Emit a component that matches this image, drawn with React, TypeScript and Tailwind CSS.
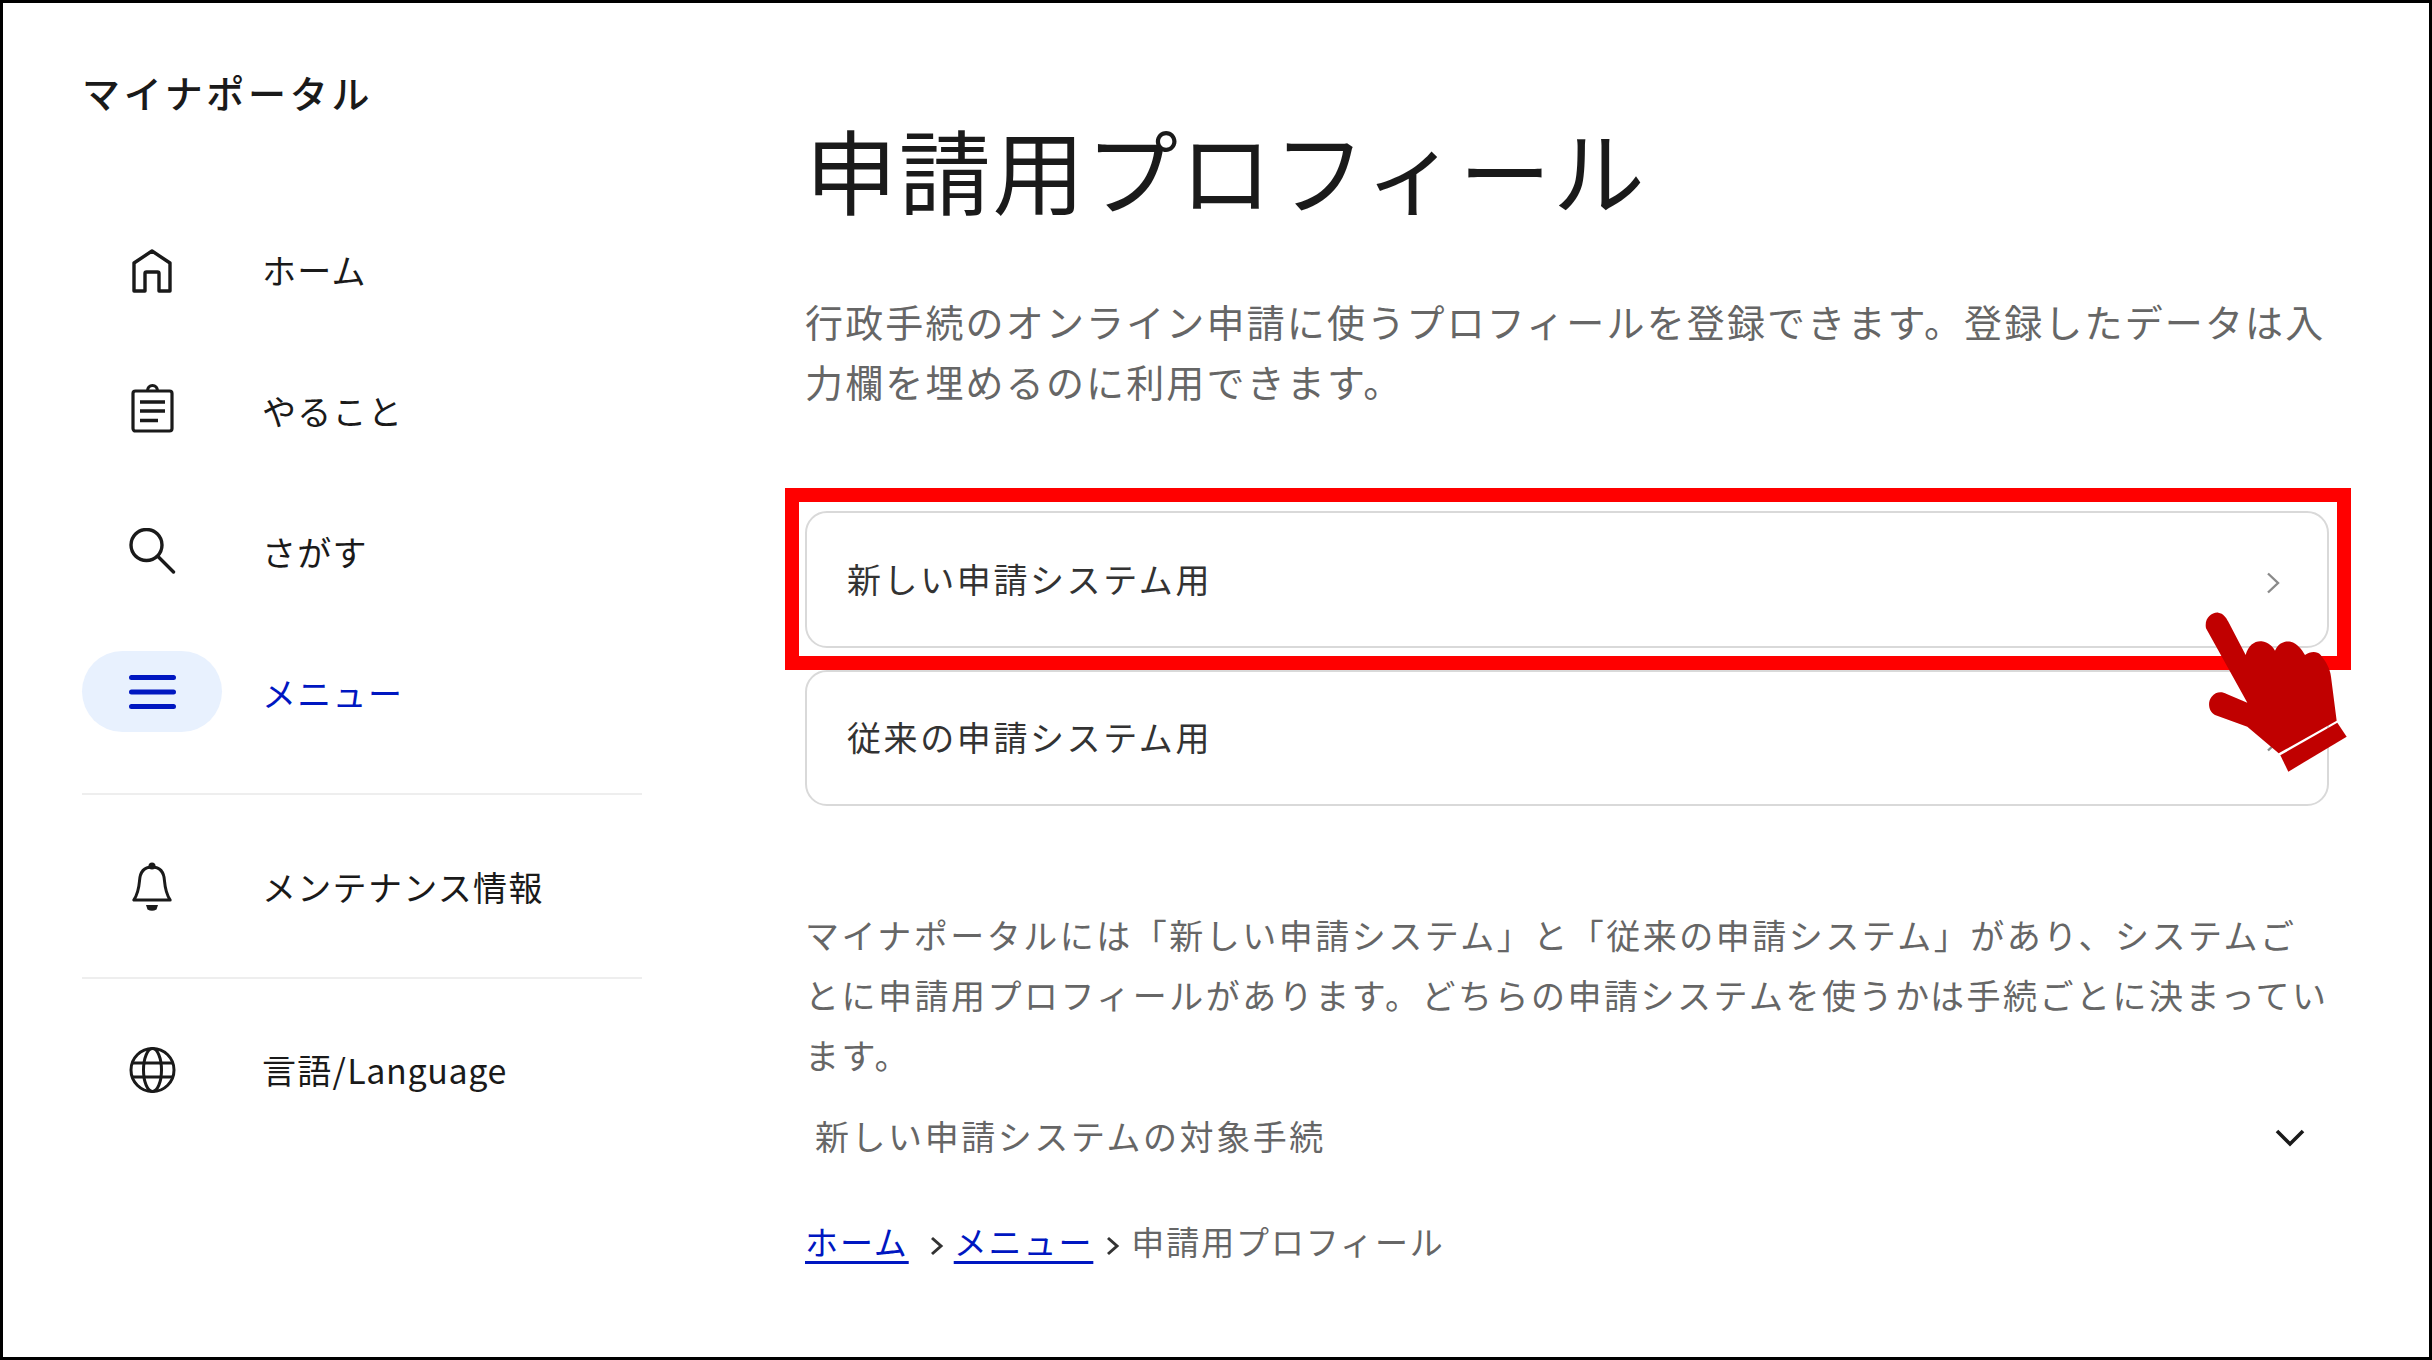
import React from "react";

const font = { fontFamily: '"Noto Sans CJK JP", "Noto Sans", sans-serif' };

function IconBox({ children, active }: { children: React.ReactNode; active?: boolean }) {
  return (
    <div className={`flex h-[81px] w-[140px] shrink-0 items-center justify-center rounded-full ${active ? "bg-[#e8f1fe]" : ""}`}>
      {children}
    </div>
  );
}

const Home = () => (
  <svg className="mt-[4px]" width="40" height="44" viewBox="0 0 40 44" fill="none" stroke="#1a1a1a" strokeWidth="3.4" strokeLinejoin="round">
    <path d="M2 42V14L20 2L38 14V42H27V24.500Q27 23 25.500 23H14.500Q13 23 13 24.500V42Z" />
  </svg>
);
const Clip = () => (
  <svg className="mb-[4px]" width="43" height="50" viewBox="0 0 43 50" fill="none" stroke="#1a1a1a" strokeWidth="3.2" strokeLinejoin="round">
    <rect x="2" y="8" width="39" height="40" rx="2.500" />
    <path d="M16.500 8a5 5.500 0 0 1 10 0" />
    <path d="M9 19H34M9 28H34M9 37.500H27" strokeWidth="3.400" />
  </svg>
);
const Search = () => (
  <svg width="47" height="46" viewBox="0 0 47 46" fill="none" stroke="#1a1a1a" strokeWidth="3.400" strokeLinecap="round">
    <circle cx="17.500" cy="17" r="15.500" />
    <path d="M29 28.500L44.500 44" />
  </svg>
);
const Menu = () => (
  <svg width="47" height="34" viewBox="0 0 47 34" fill="none" stroke="#0017c1" strokeWidth="5" strokeLinecap="round">
    <path d="M2.500 2.500H44.500M2.500 17H44.500M2.500 31.500H44.500" />
  </svg>
);
const Bell = () => (
  <svg className="mt-[3px]" width="40" height="50" viewBox="0 0 40 50" fill="none" stroke="#1a1a1a" strokeWidth="3" strokeLinejoin="round">
    <path d="M1.800 38H38.200C33.500 31 33 25 32.500 19C32 10 27.500 5 20 5C12.500 5 8 10 7.500 19C7 25 6.500 31 1.800 38Z" />
    <circle cx="20" cy="4" r="3.500" fill="#1a1a1a" stroke="none" />
    <path d="M14 43H26L24.500 47.500Q20 50 15.500 47.500Z" fill="#1a1a1a" stroke="none" />
  </svg>
);
const Globe = () => (
  <svg className="mt-[3px]" width="47" height="46" viewBox="0 0 47 46" fill="none" stroke="#1a1a1a" strokeWidth="3">
    <circle cx="23.500" cy="23" r="21.500" />
    <ellipse cx="23.500" cy="23" rx="9" ry="21.500" />
    <path d="M3 16H44M3 30H44" />
  </svg>
);

function NavRow({ icon, label, active, className }: { icon: React.ReactNode; label: React.ReactNode; active?: boolean; className?: string }) {
  return (
    <div className={`flex h-[141px] items-center ${className ?? ""}`}>
      <IconBox active={active}>{icon}</IconBox>
      <span className={`ml-[40px] mt-[2px] text-[34px] leading-none tracking-[1.3px] ${active ? "text-[#0017c1]" : "text-[#1a1a1a]"}`}>{label}</span>
    </div>
  );
}

const Chev = ({ className }: { className?: string }) => (
  <svg className={className} width="14" height="22" viewBox="0 0 14 22" fill="none" stroke="#8a8a8a" strokeWidth="2.400">
    <path d="M2 1.500L12 11L2 20.500" />
  </svg>
);

function Card({ label, className }: { label: string; className?: string }) {
  return (
    <div className={`flex items-center justify-between rounded-[22px] border-2 border-[#d9d9d9] bg-white pl-[40px] pr-[47px] ${className ?? ""}`}>
      <span className="mb-[2px] text-[34px] leading-none tracking-[2.6px] text-[#333333]">{label}</span>
      <Chev className="mt-[6px]" />
    </div>
  );
}

const Crumb = () => (
  <svg width="14" height="20" viewBox="0 0 14 20" fill="none" stroke="#333333" strokeWidth="3">
    <path d="M2 2L11 10L2 18" />
  </svg>
);

export default function App() {
  return (
    <div style={font} className="relative flex h-[1360px] w-[2432px] overflow-hidden border-[3px] border-black bg-white">
      <aside className="w-[802px] shrink-0 pl-[79px]">
        <div className="mt-[68px] text-[38px] font-medium leading-[42px] tracking-[3.7px] text-[#1a1a1a]">マイナポータル</div>
        <nav className="mt-[85px] w-[560px]">
          <NavRow icon={<Home />} label="ホーム" />
          <NavRow icon={<Clip />} label="やること" />
          <NavRow icon={<Search />} label="さがす" />
          <NavRow icon={<Menu />} label="メニュー" active />
          <div className="mt-[31px] h-[2px] bg-[#eeeeee]" />
          <NavRow icon={<Bell />} label="メンテナンス情報" className="mt-[20px]" />
          <div className="mt-[21px] h-[2px] bg-[#eeeeee]" />
          <NavRow
            icon={<Globe />}
            label={<>言語/<span className="tracking-[0.6px]">Language</span></>}
            className="mt-[19px]"
          />
        </nav>
      </aside>
      <main className="w-[1524px] shrink-0">
        <h1 className="mt-[110px] text-[92px] font-normal leading-[110px] tracking-[1.7px] text-[#1a1a1a]">申請用プロフィール</h1>
        <p className="mt-[68px] whitespace-nowrap text-[38px] leading-[60px] tracking-[2.15px] text-[#666666]">
          行政手続のオンライン申請に使うプロフィールを登録できます。登録したデータは入<br />力欄を埋めるのに利用できます。
        </p>
        <Card label="新しい申請システム用" className="mt-[100px] h-[137px]" />
        <Card label="従来の申請システム用" className="mt-[22px] h-[136px]" />
        <p className="mt-[99px] whitespace-nowrap text-[34px] leading-[60px] tracking-[2.5px] text-[#666666]">
          マイナポータルには「新しい申請システム」と「従来の申請システム」があり、システムご<br />とに申請用プロフィールがあります。どちらの申請システムを使うかは手続ごとに決まってい<br />ます。
        </p>
        <div className="mt-[26px] flex h-[50px] items-center justify-between pl-[10px] pr-[24px]">
          <span className="text-[34px] leading-none tracking-[2.56px] text-[#666666]">新しい申請システムの対象手続</span>
          <svg className="mt-[3px]" width="30" height="18" viewBox="0 0 30 18" fill="none" stroke="#1a1a1a" strokeWidth="3.600"><path d="M2 2L15 15L28 2" /></svg>
        </div>
        <div className="mt-[55px] flex items-center text-[33px] leading-[50px] tracking-[1.9px]">
          <a className="text-[#0017c1] underline underline-offset-[6px]">ホーム</a>
          <span className="ml-[21px] mr-[10px] mt-[10px]"><Crumb /></span>
          <a className="text-[#0017c1] underline underline-offset-[6px]">メニュー</a>
          <span className="ml-[13px] mr-[11px] mt-[10px]"><Crumb /></span>
          <span className="text-[#666666]">申請用プロフィール</span>
        </div>
      </main>

      <div className="absolute left-[782px] top-[485px] h-[182px] w-[1566px] border-[14px] border-[#ff0000]" />
      <svg className="absolute left-[2047px] top-[467px]" width="382" height="340" viewBox="0 0 1146 1020" fill="#c00000">
        <path d="M468 475C462 445 485 426 505 428C520 430 528 442 535 455L587 555C595 525 615 512 635 514C655 516 668 530 675 542C685 518 705 512 722 515C742 520 755 538 765 555C780 545 800 542 812 555C828 575 840 595 843 620L860 752L686 850L592 770L495 735C475 725 472 695 485 680C497 665 515 664 530 672L592 698Z" />
        <path d="M691 856L862 758L890 800L715 905Z" />
      </svg>
    </div>
  );
}
